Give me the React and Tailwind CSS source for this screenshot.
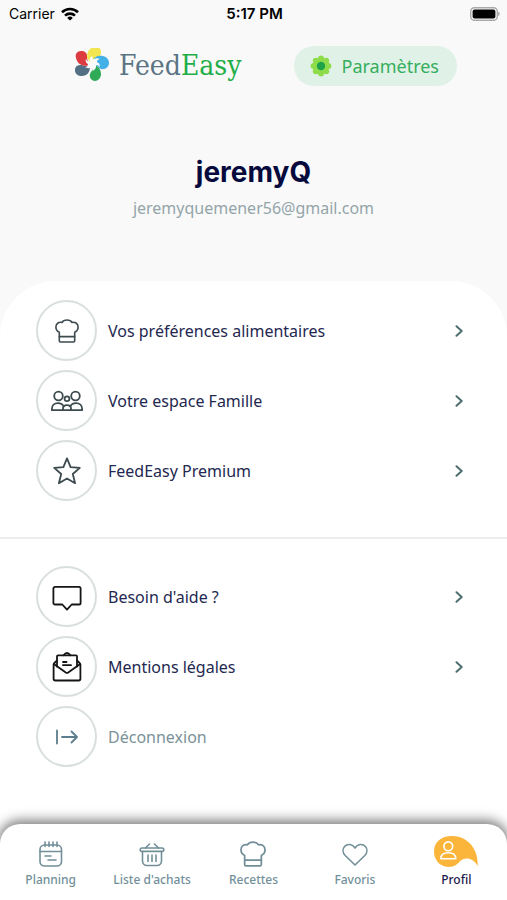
import React from 'react';

const Logo = () => (
  <svg className="w-9 h-9" viewBox="3 6 36 36" aria-hidden="true">
    <path fill="#f1e650" d="M15 16c0-6 2-10 7-11 4-1 7 1 7 5s-2 6-5 7c-3 .5-4 1-5 4z" />
    <path fill="#44b0e8" d="M21 18c2-4 6-5 10-4s6 4 6 7c0 4-4 7-8 6-3-1-4-4-8-5z" />
    <path fill="#2fab57" d="M23 23c4 2 6 5 6 9s-3 7-6 7-6-3-5-7c1-3 4-4 3-9z" />
    <path fill="#536f83" d="M18 25c0 5-3 9-8 9-4 0-7-2-7-6s3-5 6-5 5 2 10 1z" />
    <path fill="#dc3b40" d="M15 24c-6 0-10-3-11-8-1-4 1-7 5-7s6 2 6 5 0 4 2 7z" />
    <path
      fill="#fafafa"
      d="M18.500 20c-1.500-2-1-4.500 2-6-.5 2 .2 3 1.300 3.600 1.200-1.600 3.600-2 6.200-.6-2.400.4-3.200 1.600-3 3.200 2.200.4 3.200 2.400 2.600 5-1-1.800-2.400-2.400-3.600-2 .4 2.600-.8 4.800-3.800 5.800 1-2 .8-3.600-.4-4.600-1.600 2-4.200 2.400-6.800.6 2.200-.2 3.400-1.200 3.600-2.600-2.200-.6-3.400-2.800-2.800-5.600 1.200 2.200 2.600 3.200 4.700 3.200z"
    />
  </svg>
);

const Flower = () => (
  <svg className="w-[22px] h-[22px]" viewBox="0 0 22 22" aria-hidden="true">
    <g fill="#8fdc4b">
      <circle cx="11" cy="11" r="8" />
      <circle cx="11" cy="3.6" r="3" />
      <circle cx="16.2" cy="5.8" r="3" />
      <circle cx="18.4" cy="11" r="3" />
      <circle cx="16.2" cy="16.2" r="3" />
      <circle cx="11" cy="18.4" r="3" />
      <circle cx="5.8" cy="16.2" r="3" />
      <circle cx="3.6" cy="11" r="3" />
      <circle cx="5.8" cy="5.8" r="3" />
    </g>
    <circle cx="11" cy="11" r="4.2" fill="#1fa34a" />
  </svg>
);

const Wifi = () => (
  <svg className="w-[18px] h-[14px]" viewBox="0 0 18 14" fill="none" stroke="#000" strokeWidth="2.6" aria-hidden="true">
    <path d="M1 5.2a11.5 11.5 0 0 1 16 0" />
    <path d="M4 8.6a7.2 7.2 0 0 1 10 0" />
    <path d="M9 13.6 6.2 10.9a4 4 0 0 1 5.6 0z" fill="#000" stroke="none" />
  </svg>
);

const Battery = () => (
  <svg className="w-[30px] h-[14px]" viewBox="0 0 30 14" aria-hidden="true">
    <rect x="0.7" y="0.7" width="26.6" height="12.6" rx="3.8" fill="#fafafa" stroke="#a9a9a9" strokeWidth="1.4" />
    <rect x="2.6" y="2.4" width="22.8" height="9.2" rx="2" fill="#000" />
    <path d="M28.2 4.8c2 .6 2 3.8 0 4.4z" fill="#a9a9a9" />
  </svg>
);

const Icon = ({ children, className, size = 24, width = 1.8 }) => (
  <svg
    className={className}
    viewBox={`0 0 ${size} ${size}`}
    fill="none"
    stroke="currentColor"
    strokeWidth={width}
    strokeLinecap="round"
    strokeLinejoin="round"
    aria-hidden="true"
  >
    {children}
  </svg>
);

const ChefHat = ({ className }) => (
  <Icon className={className} width={1.6}>
    <path d="M4.300 21.800v-8.500C2.200 12.300.9 10.300.9 8c0-3.200 2.700-5.300 6-4.500C7.900 1.900 9.800 1 12 1s4.100.9 5.100 2.500c3.300-.8 6 1.300 6 4.500 0 2.300-1.300 4.300-3.400 5.300v8.500c0 .8-.5 1.200-1.200 1.200h-13c-.7 0-1.200-.4-1.200-1.200z" />
    <path d="M4.300 17.600h15.400" />
  </Icon>
);

const Family = () => (
  <Icon className="w-8 h-8" size={32}>
    <circle cx="7.500" cy="11" r="4.300" />
    <circle cx="24.500" cy="11" r="4.300" />
    <circle cx="16" cy="13.800" r="2.400" />
    <path d="M12 25.200H.9v-1.300c0-3.400 2.600-5.800 6-5.800 3 0 5 1.400 5.700 3.300M20 25.200h11.100v-1.300c0-3.400-2.600-5.800-6-5.800-3 0-5 1.400-5.700 3.300" />
    <path d="M12 25.200v-1.400c0-2.200 1.700-3.700 4-3.700s4 1.500 4 3.700v1.400z" />
  </Icon>
);

const Star = () => (
  <Icon className="w-7 h-7" size={28}>
    <path d="M14 1.400l3.600 8.800 9.200.6-7 6.200 2.300 9.200L14 21.500l-8.100 4.700L8.200 17l-7-6.200 9.200-.6z" />
  </Icon>
);

const Bubble = () => (
  <Icon className="w-[30px] h-[30px]" size={30}>
    <path d="M3 4.900h24a1.600 1.600 0 0 1 1.600 1.600v14.400a1.600 1.600 0 0 1-1.600 1.600h-7.300L15 27.600l-4.700-5.100H3a1.600 1.600 0 0 1-1.600-1.600V6.500A1.600 1.600 0 0 1 3 4.900z" />
  </Icon>
);

const Letter = () => (
  <Icon className="w-[30px] h-[30px]" size={30}>
    <path d="M5 8.400 2.400 11c-.6.600-.8 1-.8 1.800v14c0 1 .8 1.700 1.700 1.700h23.400c1 0 1.700-.8 1.700-1.700v-14c0-.8-.3-1.200-.8-1.800L25 8.400" />
    <path d="M5 14.500V4.300c0-.6.400-1 1-1h18c.6 0 1 .4 1 1v10.200" />
    <path d="M11.600 3.200c1-1.400 2-2.200 3.400-2.200s2.400.8 3.400 2.200" />
    <path d="m1.800 12 12 8.500c.8.500 1.600.5 2.400 0l12-8.500" />
    <path d="M11 10h3.500M11 13.200h8" />
  </Icon>
);

const Logout = () => (
  <Icon className="w-6 h-6">
    <path d="M2 5.500v13M7 12h15M16.500 6.500 22 12l-5.500 5.500" />
  </Icon>
);

const Chevron = () => (
  <Icon className="w-3 h-3 text-[#4d6e6d]" size={12} width={2}>
    <path d="M3.500 1.200 8.700 6l-5.200 4.800" />
  </Icon>
);

const Calendar = () => (
  <Icon className="w-[26px] h-[26px]" size={26} width={1.6}>
    <rect x="2" y="4" width="21.500" height="21" rx="4.500" />
    <path d="M2 10.500h21.500M7 1v4.500M11 1v4.500M15 1v4.500M19 1v4.500M7 15h6M10 19h8" />
  </Icon>
);

const Basket = () => (
  <Icon className="w-[26px] h-[26px]" size={26} width={1.6}>
    <rect x="1.200" y="7" width="23.600" height="3.400" rx="1.700" />
    <path d="M3.500 10.500v9.500a4.500 4.500 0 0 0 4.500 4.500h10a4.500 4.500 0 0 0 4.500-4.500v-9.500M6.500 7l4-4M19.500 7l-4-4M9 14v6.500M13 14v6.500M17 14v6.500" />
  </Icon>
);

const Heart = () => (
  <Icon className="w-[26px] h-[26px]" size={26} width={1.6}>
    <path d="M13 24 3.200 14.500C.6 11.800.4 8 2.600 5.500 5.600 2.200 10.600 3 13 7c2.400-4 7.400-4.800 10.400-1.500 2.200 2.500 2 6.300-.6 9z" />
  </Icon>
);

const ProfileBlob = () => (
  <svg className="w-11 h-9" viewBox="0 0 44 36" fill="none" aria-hidden="true">
    <path
      d="M18 0C7 0 0 6 0 15.500 0 24.500 6.500 31 15 31c5 0 7.500-2 10.500-5.200 3.500-3.800 9-4.300 13-1.600 2.300 1.500 4 3.400 5 6C45 15 35 0 18 0z"
      fill="#fcb53b"
    />
    <circle cx="14.300" cy="10.300" r="4.400" stroke="#fff" strokeWidth="1.600" />
    <path d="M6.800 22.800c0-3.900 3-6 7.500-6s7.500 2.100 7.500 6z" stroke="#fff" strokeWidth="1.600" strokeLinejoin="round" />
  </svg>
);

const mainLinks = [
  { label: 'Vos préférences alimentaires', icon: <ChefHat className="w-6 h-6" />, color: 'text-[#3d4b4f]' },
  { label: 'Votre espace Famille', icon: <Family />, color: 'text-[#3d4b4f]' },
  { label: 'FeedEasy Premium', icon: <Star />, color: 'text-[#3d4b4f]' },
];

const otherLinks = [
  { label: "Besoin d'aide ?", icon: <Bubble />, color: 'text-[#151515]' },
  { label: 'Mentions légales', icon: <Letter />, color: 'text-[#151515]' },
];

const tabs = [
  { label: 'Planning', icon: <Calendar /> },
  { label: "Liste d'achats", icon: <Basket /> },
  { label: 'Recettes', icon: <ChefHat className="w-[26px] h-[26px]" /> },
  { label: 'Favoris', icon: <Heart /> },
  { label: 'Profil', icon: <ProfileBlob />, active: true },
];

const IconCircle = ({ color, children }) => (
  <span className={`flex w-[61px] h-[61px] shrink-0 items-center justify-center rounded-full border-2 border-[#d9dfdf] ${color}`}>
    {children}
  </span>
);

const MenuLink = ({ label, icon, color }) => (
  <a href="#" className="flex items-center gap-[11px] text-[#232850]">
    <IconCircle color={color}>{icon}</IconCircle>
    <span className="flex-1">{label}</span>
    <Chevron />
  </a>
);

const App = () => {
  return (
    <div className="flex min-h-screen flex-col overflow-hidden bg-[#f9f9f9] font-['Noto_Sans',sans-serif]">
      {/* Status bar */}
      <div className="grid h-7 grid-cols-3 items-center pl-[9px] pr-[7px] font-['Inter',sans-serif] text-sm text-black">
        <div className="flex items-center gap-1.5">
          <span>Carrier</span>
          <Wifi />
        </div>
        <span className="text-center text-[15px] font-semibold">5:17 PM</span>
        <div className="flex justify-end">
          <Battery />
        </div>
      </div>

      <header className="flex items-center justify-between pt-[18px] pl-[75px] pr-[50px]">
        <div className="flex items-center gap-2">
          <Logo />
          <span className="font-['DejaVu_Serif_Condensed','DejaVu_Serif',serif] text-[28px] leading-8 text-[#5b7484]">
            Feed<span className="text-[#1fae48]">Easy</span>
          </span>
        </div>
        <button className="flex h-10 items-center gap-2.5 rounded-full bg-[#e0f2e7] pl-4 pr-[18px] text-lg text-[#35ae5c]">
          <Flower />
          Paramètres
        </button>
      </header>

      <div className="flex flex-col items-center pt-[68px] pb-[59px]">
        <h1 className="font-['Inter',sans-serif] text-[28px] font-bold leading-9 text-[#060a3c]">jeremyQ</h1>
        <p className="pt-1 text-base leading-7 text-[#94a5a9]">jeremyquemener56@gmail.com</p>
      </div>

      <main className="flex-1 rounded-t-[56px] bg-white pt-[19px] text-base">
        <nav className="flex flex-col gap-[9px] pl-9 pr-[42px] pb-9">
          {mainLinks.map((item) => (
            <MenuLink key={item.label} {...item} />
          ))}
        </nav>
        <hr className="border-t-2 border-[#ededed]" />
        <div className="flex flex-col gap-[9px] pt-[27px] pl-9 pr-[42px] pb-9">
          {otherLinks.map((item) => (
            <MenuLink key={item.label} {...item} />
          ))}
          <button className="flex items-center gap-[11px] text-left text-[#7b9299]">
            <IconCircle color="text-[#5c7d8b]">
              <Logout />
            </IconCircle>
            Déconnexion
          </button>
        </div>
      </main>

      {/* Bottom tabs */}
      <div className="bg-white">
        <nav className="grid grid-cols-5 rounded-t-[20px] bg-white pt-3 pb-3 shadow-[0_-2px_12px_2px_rgba(0,0,0,0.5)]">
          {tabs.map((tab) => (
            <a
              key={tab.label}
              href="#"
              className={`flex flex-col items-center whitespace-nowrap text-xs font-medium ${tab.active ? 'text-[#1e1a4b]' : 'text-[#728f99]'}`}
            >
              <span className="flex h-9 items-center">{tab.icon}</span>
              {tab.label}
            </a>
          ))}
        </nav>
      </div>
    </div>
  );
};

export default App;
